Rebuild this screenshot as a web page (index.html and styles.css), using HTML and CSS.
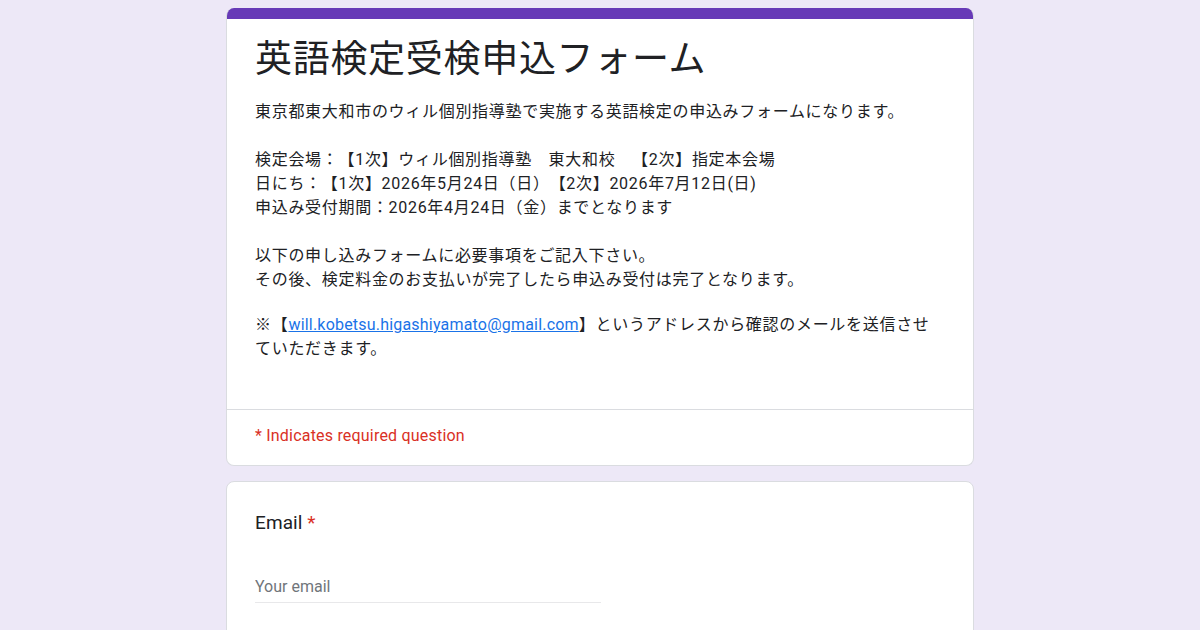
FILE: index.html
```html
<!DOCTYPE html>
<html lang="ja">
<head>
    <meta charset="UTF-8">
    <meta name="viewport" content="width=device-width, initial-scale=1.0">
    <title>英語検定受検申込フォーム</title>
    <link rel="stylesheet" href="styles.css">
</head>
<body>
    <div class="form-wrap">
        <div class="card header-card">
            <div class="theme-bar"></div>
            <div class="header-body">
                <h1 class="form-title">英語検定受検申込フォーム</h1>
                <div class="form-desc">
                    <p>東京都東大和市のウィル個別指導塾で実施する英語検定の申込みフォームになります。</p>
                    <p>検定会場：【1次】ウィル個別指導塾　東大和校　【2次】指定本会場<br>日にち：【1次】2026年5月24日（日）【2次】2026年7月12日(日)<br>申込み受付期間：2026年4月24日（金）までとなります</p>
                    <p>以下の申し込みフォームに必要事項をご記入下さい。<br>その後、検定料金のお支払いが完了したら申込み受付は完了となります。</p>
                    <p class="mail-note">※【<a href="#">will.kobetsu.higashiyamato@gmail.com</a>】というアドレスから確認のメールを送信させていただきます。</p>
                </div>
            </div>
            <div class="required-note">* Indicates required question</div>
        </div>

        <div class="card question-card">
            <div class="question-title">Email <span class="req">*</span></div>
            <div class="text-input">
                <input type="email" placeholder="Your email">
            </div>
        </div>
    </div>
</body>
</html>
```

FILE: styles.css
```css
:root {
    --bg: #ede8f7;
    --purple: #673ab7;
    --text: #202124;
    --border: #dadce0;
    --red: #d93025;
    --link: #1a73e8;
}

* {
    margin: 0;
    padding: 0;
    box-sizing: border-box;
}

body {
    background-color: var(--bg);
    color: var(--text);
    font-family: Roboto, "Noto Sans CJK JP", sans-serif;
    text-spacing-trim: space-all;
}

.form-wrap {
    width: 748px;
    margin: 0 auto;
    padding-top: 8px;
    display: flex;
    flex-direction: column;
    gap: 15px;
}

.card {
    background-color: white;
    border: 1px solid var(--border);
    border-radius: 8px;
    overflow: hidden;
}

.header-card {
    border-top: none;
}

.theme-bar {
    height: 11px;
    background-color: var(--purple);
}

.header-body {
    padding: 18px 28px 48px;
    border-bottom: 1px solid var(--border);
}

.form-title {
    font-size: 37px;
    font-weight: 400;
    line-height: 46px;
    letter-spacing: 0.7px;
    margin-bottom: 17px;
}

.form-desc {
    font-size: 16px;
    line-height: 24px;
    letter-spacing: 0.7px;
}

.form-desc p + p {
    margin-top: 24px;
}

.form-desc p.mail-note {
    margin-top: 21px;
}

.form-desc a {
    color: var(--link);
    letter-spacing: 0.2px;
}

.required-note {
    color: var(--red);
    font-size: 16px;
    line-height: 24px;
    letter-spacing: 0.2px;
    padding: 14px 28px 17px;
}

.question-card {
    padding: 27px 28px 28px;
    min-height: 200px;
}

.question-title {
    font-size: 19px;
    line-height: 28px;
    letter-spacing: 0.1px;
}

.question-title .req {
    color: var(--red);
}

.text-input {
    width: 346px;
    margin-top: 35px;
    border-bottom: 1px solid #e8e8ea;
}

.text-input input {
    width: 100%;
    border: none;
    outline: none;
    background: transparent;
    font-family: inherit;
    font-size: 16px;
    line-height: 24px;
    padding: 3px 0 3px;
    color: var(--text);
}

.text-input input::placeholder {
    color: #70757a;
}
```
